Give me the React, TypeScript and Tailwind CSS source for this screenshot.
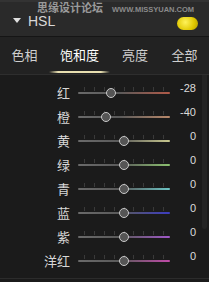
const rows = [
  { label: "红", value: -28, color: "#b05a48" },
  { label: "橙", value: -40, color: "#b8886a" },
  { label: "黄", value: 0, color: "#c8c88e" },
  { label: "绿", value: 0, color: "#8cc070" },
  { label: "青", value: 0, color: "#6cc4c4" },
  { label: "蓝", value: 0, color: "#3c3cc0" },
  { label: "紫", value: 0, color: "#a058c8" },
  { label: "洋红", value: 0, color: "#c04aa8" },
];

const tabs = ["色相", "饱和度", "亮度", "全部"];
const tabWidths = ["w-[49px]", "w-[61px]", "w-[50px]", "w-[49px]"];

function Slider({ value, color }: { value: number; color: string }) {
  const pos = ((value + 100) / 200) * 92;
  return (
    <div className="relative w-[92px] h-[24px]">
      <div className="absolute left-[6px] right-[6px] top-[6px] flex justify-between">
        {Array.from({ length: 9 }).map((_, i) => (
          <div key={i} className="w-px h-[4px] bg-[#3a3a3a]" />
        ))}
      </div>
      <div
        className="absolute left-0 right-0 top-[11px] h-[2px] rounded-full"
        style={{ background: `linear-gradient(to right, #6a6a6a, #5a5a5a 45%, ${color})` }}
      />
      <div
        className="absolute top-[7px] w-[10px] h-[10px] rounded-full bg-[#555] border border-[#c8c8c8]"
        style={{ left: pos - 5 }}
      />
    </div>
  );
}

export default function App() {
  return (
    <div className="w-[209px] h-[282px] bg-[#1b1b1b] overflow-hidden flex flex-col font-['Liberation_Sans','Noto_Sans_CJK_SC',sans-serif]">
      <div className="relative h-[37px] bg-[#2a2a2a] border-b border-[#151515] flex items-center">
        <div className="absolute left-0 right-0 top-0 h-[2px] bg-[#333]" />
        <div className="ml-[13px] mt-[5px] w-0 h-0 border-l-[4px] border-r-[4px] border-t-[5px] border-l-transparent border-r-transparent border-t-[#e0e0e0]" />
        <span className="ml-[7px] mt-[5px] text-[14px] leading-none text-[#d8d8d8]">HSL</span>
        <span className="absolute left-[37px] top-[3px] text-[11px] leading-none text-[#9a9a9a] font-bold">思缘设计论坛</span>
        <span className="absolute left-[112px] top-[6px] whitespace-nowrap text-[7.5px] leading-none text-[#8a8a8a] font-bold">WWW.MISSYUAN.COM</span>
        <div className="absolute left-[177px] top-[17px] w-[21px] h-[13px] rounded-full bg-[radial-gradient(circle_at_40%_40%,#fff25a,#e0c800_60%,#b09a00)]" />
      </div>
      <div className="relative h-[38px] bg-[#222] border-b border-[#2e2e2e] flex">
        {tabs.map((t, i) => (
          <div
            key={t}
            className={`${tabWidths[i]} relative flex items-center justify-center text-[13px] ${i === 1 ? "text-white" : "text-[#cfcfcf]"}`}
          >
            {t}
            {i === 1 && (
              <div className="absolute left-0 right-0 bottom-[1px] h-[2px] bg-[linear-gradient(to_right,transparent,#e8dfb0_15%,#e8dfb0_85%,transparent)]" />
            )}
          </div>
        ))}
      </div>
      <div className="flex flex-1 border-b border-[#2c2c2c]">
        <div className="flex-1 pt-[6px] flex flex-col">
          {rows.map((r) => (
            <div key={r.label} className="h-[24px] flex items-center">
              <div className="w-[70px] text-right text-[13px] text-[#d8d8d8] leading-none">{r.label}</div>
              <div className="ml-[8px]">
                <Slider value={r.value} color={r.color} />
              </div>
              <div className="flex-1 text-right pr-[6px] text-[11px] text-[#dcdcdc] leading-none -translate-y-[5px]">
                {r.value}
              </div>
            </div>
          ))}
        </div>
        <div className="w-[7px] pr-[2px]">
          <div className="w-[5px] h-[154px] rounded-b-full bg-[#242424]" />
        </div>
      </div>
      <div className="h-[3px]" />
    </div>
  );
}
